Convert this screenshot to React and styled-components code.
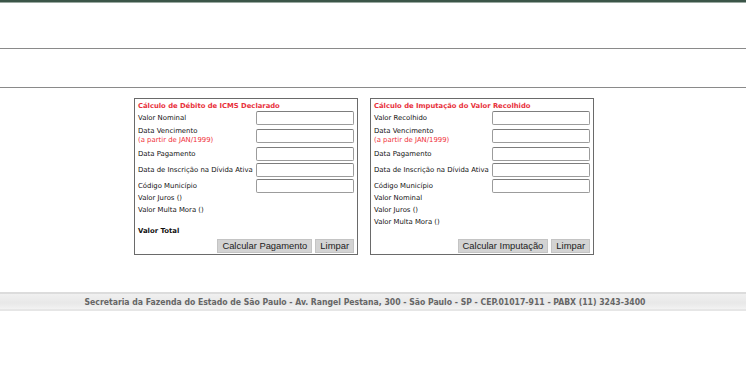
import React from 'react';
import styled, { createGlobalStyle } from 'styled-components';

const GlobalStyle = createGlobalStyle`
	body {
		margin: 0;
		background: #ffffff;
		font-family: "DejaVu Sans", Verdana, sans-serif;
	}
`;

const Page = styled.div`
	width: 746px;
	display: flex;
	flex-direction: column;
`;

const TopBar = styled.div`
	height: 2px;
	background: #3b5548;
	border-bottom: 1px solid #9aa9a1;
`;

const Band = styled.div`
	height: ${(p) => p.h}px;
	border-bottom: 1px solid #8a8a8a;
`;

const Forms = styled.div`
	display: flex;
	gap: 12px;
	padding: 10px 0 0 134px;
`;

const Box = styled.div`
	width: 218px;
	height: 153px;
	border: 1px solid #6a6a6a;
	padding: 2px 2px 0 2px;
	display: flex;
	flex-direction: column;
`;

const Title = styled.div`
	color: #e8313c;
	font-weight: bold;
	font-size: 6.8px;
	line-height: 10px;
	padding-left: 1px;
`;

const Grid = styled.div`
	display: grid;
	grid-template-columns: 1fr 99px;
	row-gap: 2px;
	align-items: center;
`;

const Label = styled.div`
	font-size: 6.9px;
	line-height: 9px;
	color: #111;
	padding-left: 1px;
	white-space: nowrap;
`;

const Note = styled.span`
	display: block;
	color: #f0303a;
`;

const Input = styled.div`
	height: 12px;
	border: 1px solid #9c9c9c;
	border-top-color: #7d7d7d;
	border-radius: 2px;
	background: #fff;
	margin-right: 1px;
`;

const Info = styled.div`
	font-size: 6.9px;
	line-height: 9px;
	color: #111;
	padding-left: 1px;
	margin-top: ${(p) => p.mt || 3}px;
	font-weight: ${(p) => (p.bold ? 'bold' : 'normal')};
`;

const Actions = styled.div`
	margin-top: auto;
	margin-bottom: 1px;
	display: flex;
	justify-content: flex-end;
	gap: 3px;
	padding-right: 1px;
`;

const Button = styled.button`
	height: 14px;
	padding: 0 4px;
	font-family: "Liberation Sans", Arial, sans-serif;
	font-size: 9.4px;
	line-height: 12px;
	color: #222;
	background: #d3d3d3;
	border: 1px solid #c4c4c4;
	border-radius: 0;
`;

const Footer = styled.div`
	margin-top: 37px;
	height: 15px;
	padding-right: 16px;
	border-top: 2px solid #dcdcdc;
	border-bottom: 2px solid #e6e6e6;
	background: linear-gradient(#f0f0f0, #e8e8e8 60%, #f2f2f2);
	display: flex;
	align-items: center;
	justify-content: center;
	font-family: "DejaVu Sans Condensed", "DejaVu Sans", sans-serif;
	font-weight: bold;
	font-size: 8.6px;
	color: #666666;
`;

const Row = ({ label, note }) => (
	<>
		<Label>
			{label}
			{note && <Note>{note}</Note>}
		</Label>
		<Input />
	</>
);

const FormBox = ({ title, first, infos, total, action }) => (
	<Box>
		<Title>{title}</Title>
		<Grid>
			<Row label={first} />
			<Row label="Data Vencimento" note="(a partir de JAN/1999)" />
			<Row label="Data Pagamento" />
			<Row label="Data de Inscrição na Dívida Ativa" />
			<Row label="Código Município" />
		</Grid>
		{infos.map((t, i) => (
			<Info key={t} mt={i === 0 ? 1 : 3}>
				{t}
			</Info>
		))}
		{total && (
			<Info bold mt={12}>
				Valor Total
			</Info>
		)}
		<Actions>
			<Button>{action}</Button>
			<Button>Limpar</Button>
		</Actions>
	</Box>
);

const App = () => (
	<Page>
		<GlobalStyle />
		<TopBar />
		<Band h={45} />
		<Band h={38} />
		<Forms>
			<FormBox
				title="Cálculo de Débito de ICMS Declarado"
				first="Valor Nominal"
				infos={['Valor Juros ()', 'Valor Multa Mora ()']}
				total
				action="Calcular Pagamento"
			/>
			<FormBox
				title="Cálculo de Imputação do Valor Recolhido"
				first="Valor Recolhido"
				infos={['Valor Nominal', 'Valor Juros ()', 'Valor Multa Mora ()']}
				action="Calcular Imputação"
			/>
		</Forms>
		<Footer>
			Secretaria da Fazenda do Estado de São Paulo - Av. Rangel Pestana, 300 - São Paulo - SP - CEP.01017-911 - PABX (11) 3243-3400
		</Footer>
	</Page>
);

export default App;
